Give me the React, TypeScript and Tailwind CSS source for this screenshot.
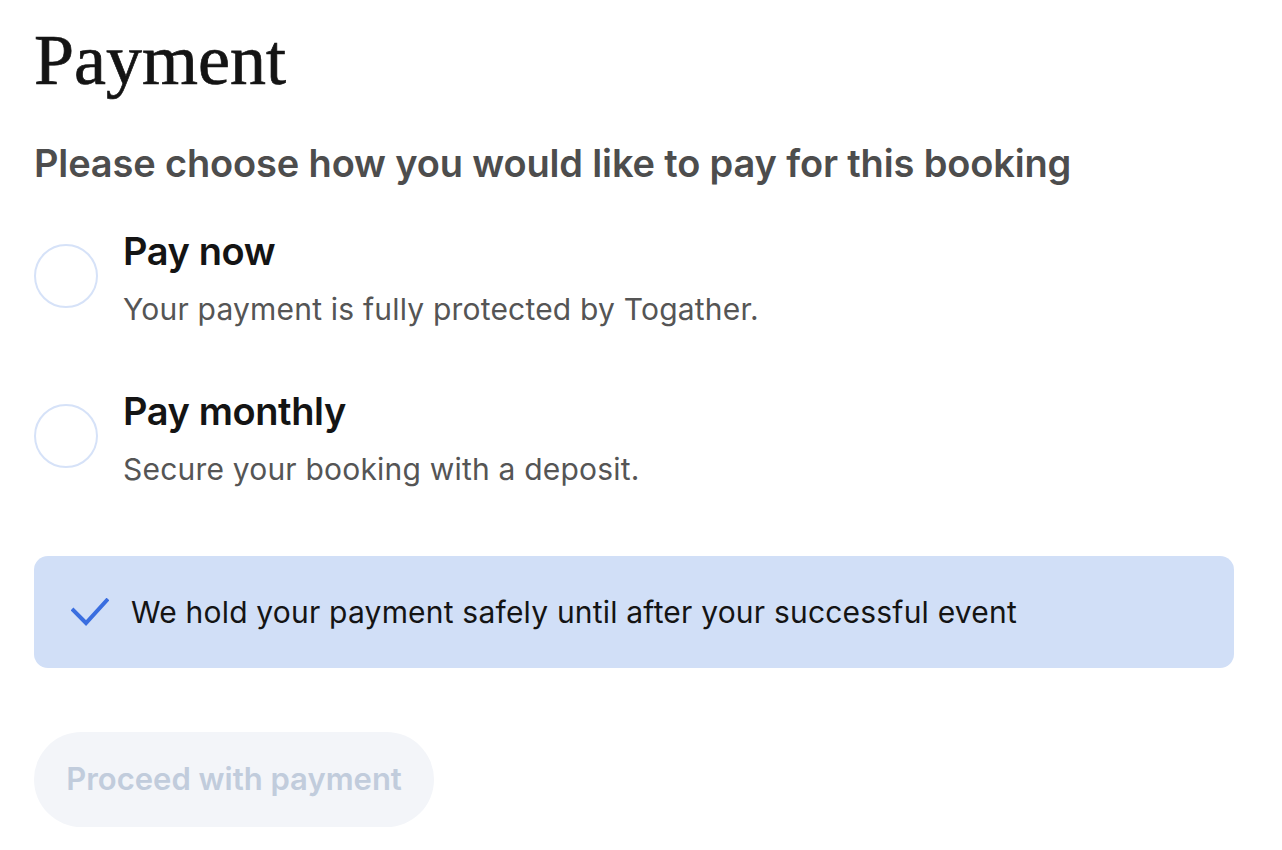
function Radio() {
  return (
    <span className="mt-[16px] block h-[64px] w-[64px] shrink-0 rounded-full border-2 border-[#d6e2f8] bg-white" />
  );
}

function Option({ title, text }: { title: string; text: string }) {
  return (
    <label className="flex items-start gap-[25px]">
      <Radio />
      <div className="flex flex-col">
        <span className="text-[38px] font-semibold leading-[46px] tracking-[-0.4px] text-[#141414]">{title}</span>
        <span className="mt-[17px] text-[30px] leading-[36px] tracking-[0.2px] text-[#555555]">{text}</span>
      </div>
    </label>
  );
}

export default function App() {
  return (
    <div className="min-h-screen bg-white font-['Inter',sans-serif]">
      <div className="px-[34px] pt-[20px]">
        <h1 className="font-['Liberation_Serif',serif] text-[72px] leading-[80px] text-[#141414] [-webkit-text-stroke:0.7px_#141414]">
          Payment
        </h1>
        <p className="mt-[40px] text-[38px] font-semibold leading-[46px] tracking-[-0.15px] text-[#4d4d4d]">
          Please choose how you would like to pay for this booking
        </p>
        <div className="mt-[42px] flex flex-col gap-[61px]">
          <Option title="Pay now" text="Your payment is fully protected by Togather." />
          <Option title="Pay monthly" text="Secure your booking with a deposit." />
        </div>
        <div className="mt-[69px] flex h-[112px] w-[1200px] items-center gap-[22px] rounded-[14px] bg-[#d1dff7] px-[37px]">
          <svg width="38" height="28" viewBox="0 0 38 28" fill="none" className="shrink-0">
            <path d="M1 11 L15 25 L37 1" stroke="#3a6ee0" strokeWidth="4" />
          </svg>
          <span className="text-[30px] leading-[36px] tracking-[0.2px] text-[#141414]">
            We hold your payment safely until after your successful event
          </span>
        </div>
        <button
          disabled
          className="mt-[64px] h-[95px] w-[400px] rounded-full bg-[#f3f5f9] text-[31px] font-semibold text-[#c1ccdc]"
        >
          Proceed with payment
        </button>
      </div>
    </div>
  );
}
